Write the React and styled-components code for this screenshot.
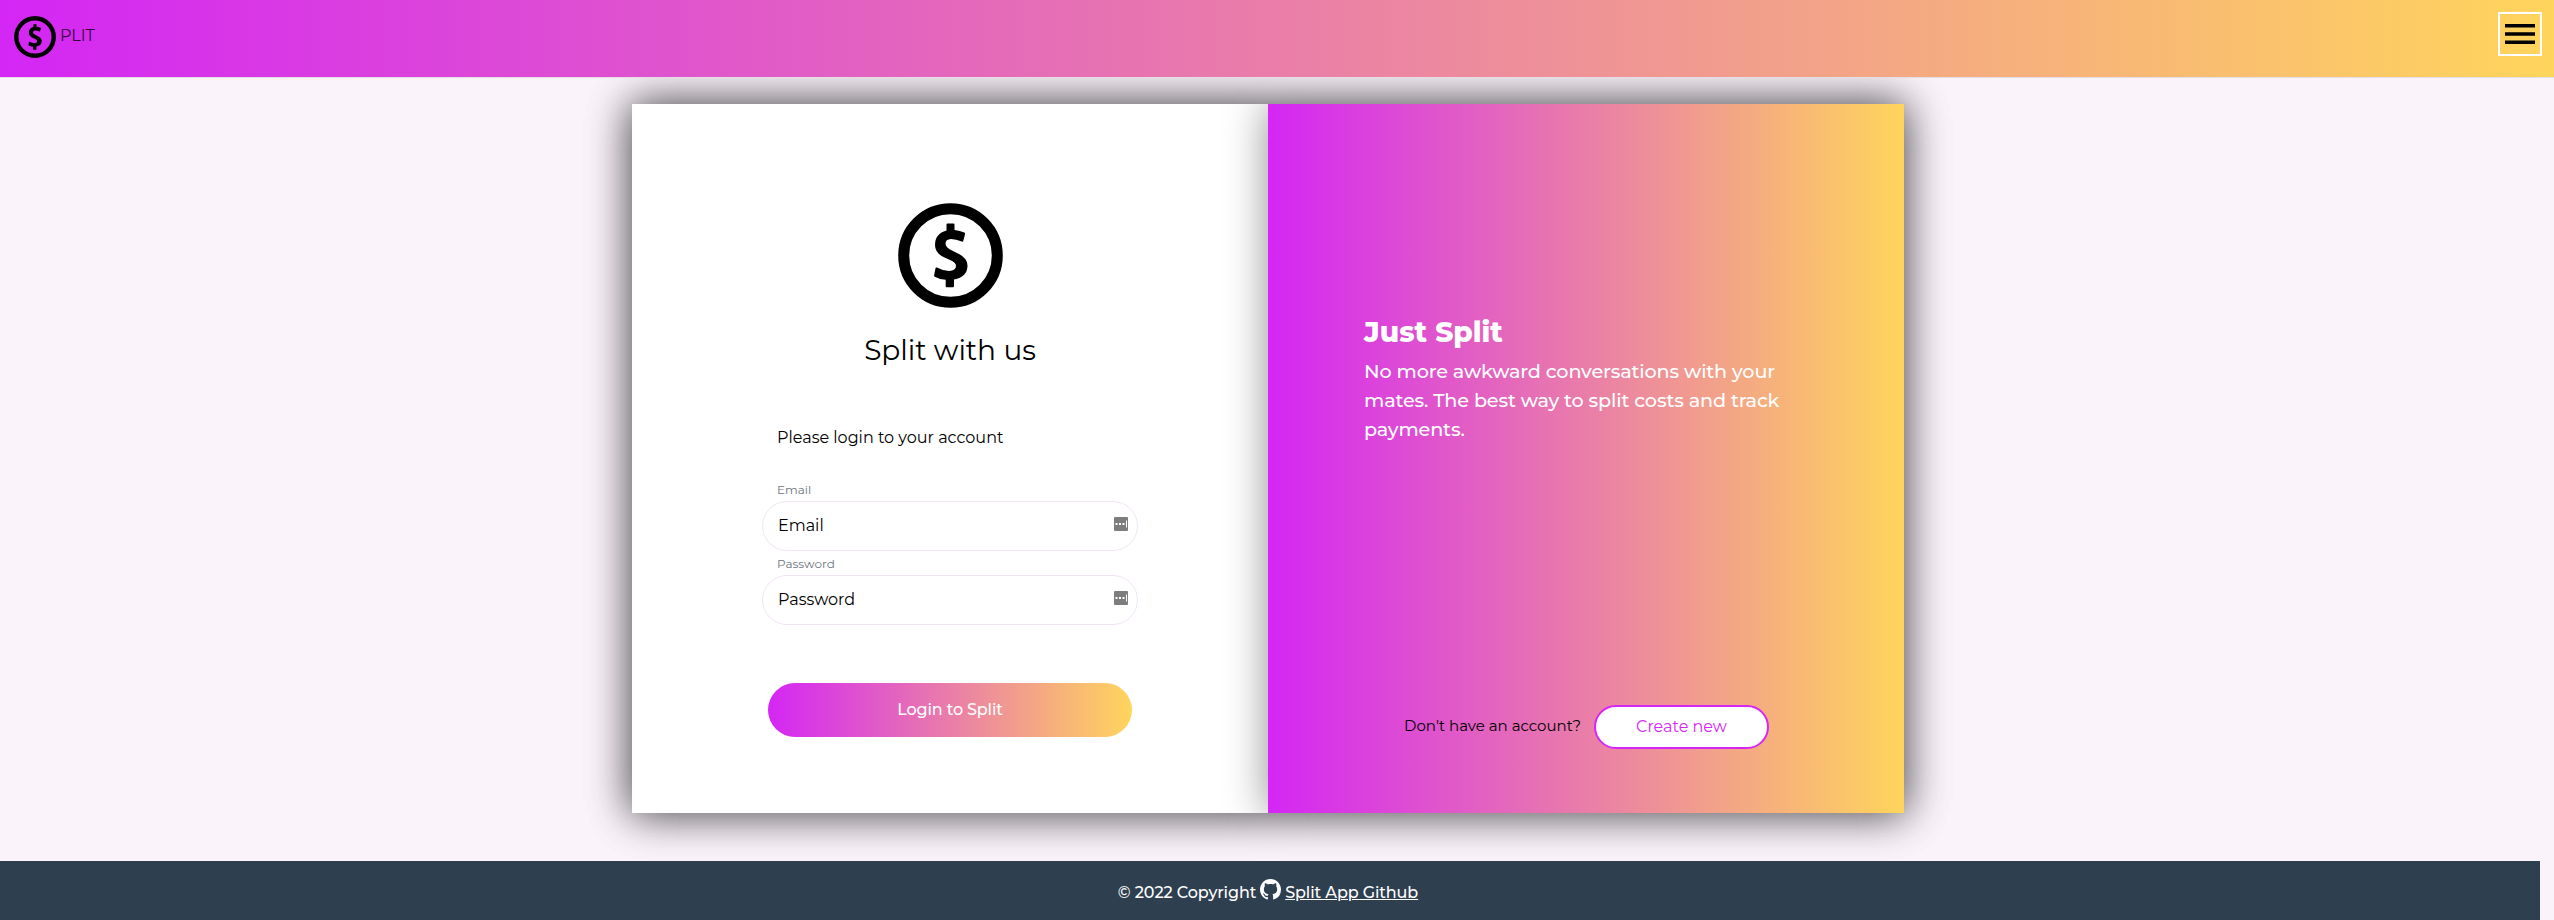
import React from "react";
import styled, { createGlobalStyle, css } from "styled-components";

const gradient = "linear-gradient(to right, #d426f5, #ffd55c)";
const shadow = "0 0 40px rgba(0, 0, 0, 0.44)";

const GlobalStyle = createGlobalStyle`
  *, *::before, *::after { box-sizing: border-box; }
  html, body { margin: 0; padding: 0; }
  body {
    background: #faf3fa;
    color: #000;
    font-family: Montserrat, Inter, "Open Sans", sans-serif;
    font-size: 16px;
    line-height: 24px;
  }
`;

const Page = styled.div`
  display: flex;
  flex-direction: column;
  height: 920px;
  overflow: hidden;
`;

const Header = styled.header`
  position: relative;
  z-index: 1;
  flex: none;
  display: flex;
  justify-content: space-between;
  align-items: flex-start;
  height: 78px;
  padding: 12px 12px 0 14px;
  background: ${gradient} padding-box;
  border-bottom: 1px solid #e4dde5;
`;

const Brand = styled.a`
  display: flex;
  gap: 4px;
  padding-top: 4px;
  color: rgba(0, 0, 0, 0.8);
  text-decoration: none;
`;

const BrandName = styled.span`
  padding-top: 8px;
`;

const MenuButton = styled.button`
  display: flex;
  justify-content: center;
  align-items: center;
  width: 44px;
  height: 44px;
  padding: 0;
  border: 2px solid #fff;
  background: transparent;
`;

const Main = styled.main`
  flex: none;
  height: 783px;
  padding-top: 26px;
  margin-right: 18px;
  display: flex;
  justify-content: center;
`;

const Card = styled.section`
  display: grid;
  grid-template-columns: 636px 636px;
  width: 1272px;
  height: 709px;
  background: #fff;
  box-shadow: ${shadow};
`;

const LoginPanel = styled.div`
  display: flex;
  flex-direction: column;
  align-items: center;
  padding-top: 99px;
  background: #fff;
  box-shadow: ${shadow};
`;

const Title = styled.h1`
  margin: 24px 0 0;
  font-size: 28px;
  line-height: 36px;
  font-weight: 400;
`;

const Form = styled.form`
  display: flex;
  flex-direction: column;
  width: 376px;
  margin-top: 58px;
`;

const Prompt = styled.p`
  margin: 0 0 27px;
  padding-left: 15px;
`;

const Label = styled.label`
  padding-left: 15px;
  height: 24px;
  line-height: 25px;
  font-size: 12px;
  color: #6c757d;
`;

const Field = styled.div`
  display: flex;
  align-items: center;
  justify-content: space-between;
  width: 376px;
  height: 50px;
  padding: 0 9px 0 15px;
  border: 1px solid #f2e4f5;
  border-radius: 25px;
  background: #fff;
`;

const FieldIcon = styled.svg`
  width: 14px;
  height: 14px;
  margin-bottom: 4px;
`;

const pill = css`
  border-radius: 27px;
  font: inherit;
  padding: 0;
`;

const LoginButton = styled.button`
  ${pill}
  align-self: center;
  width: 364px;
  height: 54px;
  margin-top: 58px;
  border: 0;
  background: ${gradient};
  color: #fff;
  font-weight: 500;
  letter-spacing: -0.15px;
`;

const AboutPanel = styled.div`
  display: flex;
  flex-direction: column;
  justify-content: space-between;
  padding: 211px 110px 64px 96px;
  background: ${gradient};
  box-shadow: ${shadow};
  color: #fff;
`;

const AboutTitle = styled.h2`
  margin: 0 0 8px;
  font-size: 28px;
  line-height: 34px;
  font-weight: 800;
`;

const AboutText = styled.p`
  margin: 0;
  font-size: 19.2px;
  line-height: 29.2px;
  font-weight: 500;
  letter-spacing: -0.14px;
`;

const SignUp = styled.div`
  display: flex;
  align-items: center;
  gap: 13px;
  padding-left: 40px;
  color: #000;
`;

const SignUpText = styled.span`
  width: 177px;
  padding-bottom: 2px;
  font-size: 15px;
  white-space: nowrap;
`;

const CreateButton = styled.button`
  ${pill}
  width: 175px;
  height: 44px;
  border: 2px solid #d526f5;
  background: #fff;
  color: #d526f5;
`;

const Footer = styled.footer`
  position: relative;
  flex: none;
  display: flex;
  justify-content: center;
  gap: 4px;
  width: 2540px;
  height: 59px;
  padding: 20px 4px 0 0;
  background: #2e3f4f;
  color: #fff;
  font-weight: 500;
  letter-spacing: -0.1px;
`;

const FooterLink = styled.a`
  color: #fff;
  text-decoration: underline;
`;

const FooterIcon = styled.svg`
  width: 21px;
  height: 21px;
  margin-top: -2px;
`;

const Coin = ({ size }) => (
  <svg width={size} height={size} viewBox="0 0 105 105">
    <circle cx="52.5" cy="52.5" r="46.8" fill="none" stroke="#000" strokeWidth="11" />
    <path d="M49.5 20.5H55.5Q56.5 20.5 56.5 21.5V27Q62 27.5 66.3 29.5Q67.3 30 67.1 31L65.3 37.8Q65 39 63.8 38.5Q58 36 53 36Q47.5 36.3 47.5 40.5Q47.5 44.5 54 47.5L60 50.5Q69.5 55 69.5 62.5Q69.5 74 56 76.5V83Q56 84.3 55 84.3H48.8Q47.7 84.3 47.7 83.2V76.8Q41 76.3 36.8 73.7Q36 73.2 36.1 72.3L37.5 65.2Q37.8 64 39 64.6Q45 68 51 68Q58 67.5 58 63Q58 59.5 52 57L46 54.3Q37 50 37 42Q37 30.5 48.5 27.5V21.5Q48.5 20.5 49.5 20.5Z" />
  </svg>
);

const MenuIcon = () => (
  <svg width="30" height="20" viewBox="0 0 30 20">
    <path d="M0 0h30v3.5H0zM0 8.3h30v3.5H0zM0 16.5h30V20H0z" />
  </svg>
);

const AutofillIcon = () => (
  <FieldIcon viewBox="0 0 14 14" fill="#fff">
    <rect width="14" height="14" rx="1" fill="#7d7d7d" />
    <path d="M1.5 6h2v2h-2zM5 6h2v2H5zM8.5 6h2v2h-2zM12 3.5h1v7h-1z" />
  </FieldIcon>
);

export default function App() {
  return (
    <Page>
      <GlobalStyle />
      <Header>
        <Brand>
          <Coin size={42} />
          <BrandName>PLIT</BrandName>
        </Brand>
        <MenuButton aria-label="Menu">
          <MenuIcon />
        </MenuButton>
      </Header>
      <Main>
        <Card>
          <LoginPanel>
            <Coin size={105} />
            <Title>Split with us</Title>
            <Form>
              <Prompt>Please login to your account</Prompt>
              <Label>Email</Label>
              <Field>
                <span>Email</span>
                <AutofillIcon />
              </Field>
              <Label>Password</Label>
              <Field>
                <span>Password</span>
                <AutofillIcon />
              </Field>
              <LoginButton type="button">Login to Split</LoginButton>
            </Form>
          </LoginPanel>
          <AboutPanel>
            <div>
              <AboutTitle>Just Split</AboutTitle>
              <AboutText>
                No more awkward conversations with your mates. The best way to
                split costs and track payments.
              </AboutText>
            </div>
            <SignUp>
              <SignUpText>Don't have an account?</SignUpText>
              <CreateButton type="button">Create new</CreateButton>
            </SignUp>
          </AboutPanel>
        </Card>
      </Main>
      <Footer>
        <span>© 2022 Copyright</span>
        <FooterIcon viewBox="0 0 16 16" fill="#fff">
          <path d="M8 0C3.58 0 0 3.58 0 8c0 3.54 2.29 6.53 5.47 7.59.4.07.55-.17.55-.38 0-.19-.01-.82-.01-1.49-2.01.37-2.53-.49-2.69-.94-.09-.23-.48-.94-.82-1.13-.28-.15-.68-.52-.01-.53.63-.01 1.08.58 1.23.82.72 1.21 1.87.87 2.33.66.07-.52.28-.87.51-1.07-1.78-.2-3.64-.89-3.64-3.95 0-.87.31-1.59.82-2.15-.08-.2-.36-1.02.08-2.12 0 0 .67-.21 2.2.82.64-.18 1.32-.27 2-.27s1.36.09 2 .27c1.53-1.04 2.2-.82 2.2-.82.44 1.1.16 1.92.08 2.12.51.56.82 1.27.82 2.15 0 3.07-1.87 3.75-3.65 3.95.29.25.54.73.54 1.48 0 1.07-.01 1.93-.01 2.2 0 .21.15.46.55.38A8.01 8.01 0 0 0 16 8c0-4.42-3.58-8-8-8z" />
        </FooterIcon>
        <FooterLink>Split App Github</FooterLink>
      </Footer>
    </Page>
  );
}
